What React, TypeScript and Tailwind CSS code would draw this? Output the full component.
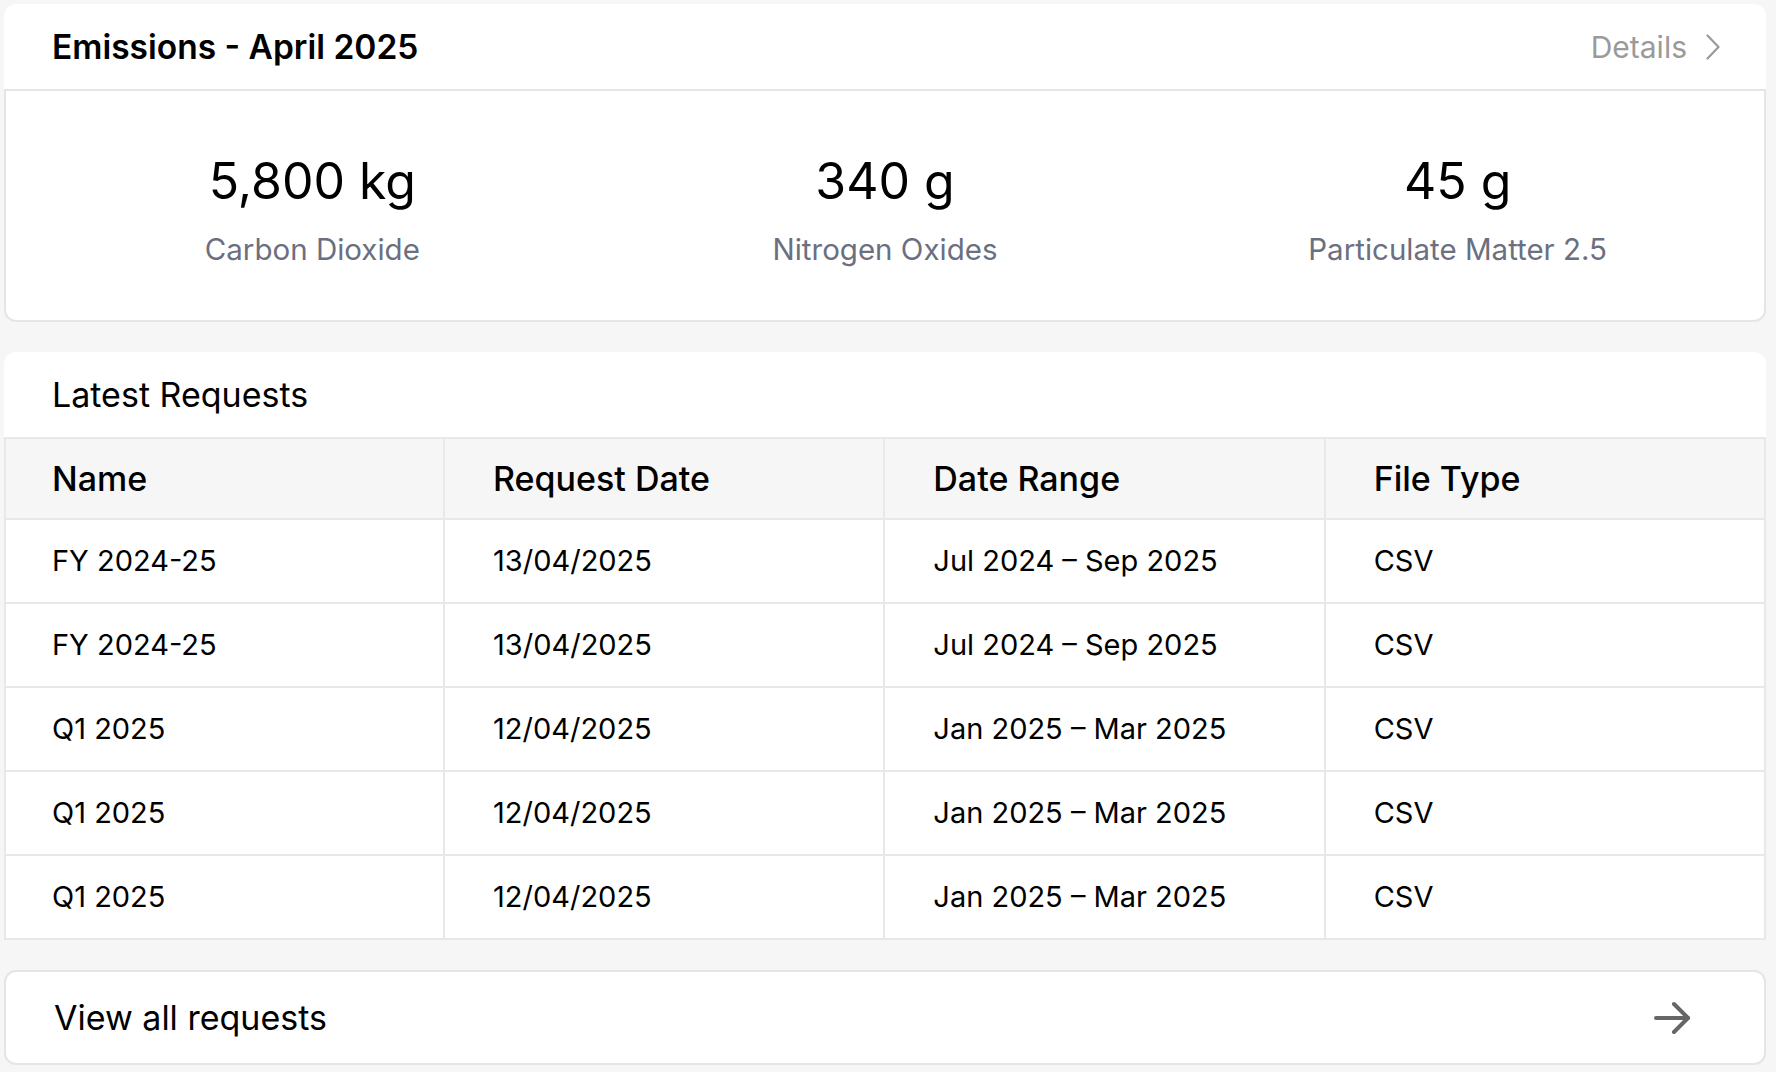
type Stat = { value: string; label: string };

const stats: Stat[] = [
  { value: "5,800 kg", label: "Carbon Dioxide" },
  { value: "340 g", label: "Nitrogen Oxides" },
  { value: "45 g", label: "Particulate Matter 2.5" },
];

const columns = ["Name", "Request Date", "Date Range", "File Type"];

const rows = [
  ["FY 2024-25", "13/04/2025", "Jul 2024 – Sep 2025", "CSV"],
  ["FY 2024-25", "13/04/2025", "Jul 2024 – Sep 2025", "CSV"],
  ["Q1 2025", "12/04/2025", "Jan 2025 – Mar 2025", "CSV"],
  ["Q1 2025", "12/04/2025", "Jan 2025 – Mar 2025", "CSV"],
  ["Q1 2025", "12/04/2025", "Jan 2025 – Mar 2025", "CSV"],
];

const ChevronIcon = () => (
  <svg width="14" height="26" viewBox="0 0 14 26" fill="none" stroke="#9a9a9a" strokeWidth="2.2" strokeLinecap="round" strokeLinejoin="round">
    <polyline points="1.5,1.5 12.5,13 1.5,24.5" />
  </svg>
);

const ArrowIcon = () => (
  <svg
    width="48"
    height="48"
    viewBox="0 0 24 24"
    fill="none"
    stroke="#666666"
    strokeWidth="2"
    strokeLinecap="round"
    strokeLinejoin="round"
  >
    <path d="M4 12h16" />
    <path d="m13 5 7 7-7 7" />
  </svg>
);

export default function App() {
  return (
    <div
      className="min-h-screen bg-[#f6f6f6] pl-[4px] pr-[10px] pt-[4px] flex flex-col gap-[30px] text-black"
      style={{ fontFamily: "Inter, 'Noto Sans', sans-serif" }}
    >
      {/* Emissions card */}
      <div>
        <div className="bg-white rounded-t-[12px] h-[85px] flex items-center justify-between pl-[48px] pr-[46px]">
          <h2 className="text-[33.5px] leading-[40px] font-semibold">Emissions - April 2025</h2>
          <div className="flex items-center gap-[19px] text-[#9a9a9a]">
            <span className="text-[30px] leading-[36px]">Details</span>
            <ChevronIcon />
          </div>
        </div>
        <div className="bg-white border-2 border-[#e4e4e9] rounded-b-[12px] grid grid-cols-3 px-[20px] pt-[60px] pb-[53px]">
          {stats.map((s) => (
            <div key={s.label} className="flex flex-col items-center">
              <div className="text-[50px] leading-[60px]">{s.value}</div>
              <div className="text-[29.5px] leading-[36px] mt-[20px] text-[#6b6f80]">{s.label}</div>
            </div>
          ))}
        </div>
      </div>

      {/* Latest requests */}
      <div>
        <div className="bg-white rounded-t-[12px] h-[85px] flex items-center pl-[48px]">
          <h2 className="text-[34px] leading-[40px]">Latest Requests</h2>
        </div>
        <div className="border-2 border-[#e8e8e8] bg-white">
          <div className="grid grid-cols-[437px_1fr_1fr_1fr] h-[79px] bg-[#f6f6f6]">
            {columns.map((c, i) => (
              <div
                key={c}
                className={`flex items-center text-[34px] leading-[40px] font-medium ${
                  i > 0 ? "border-l-2 border-[#e8e8e8] pl-[48px]" : "pl-[46px]"
                }`}
              >
                {c}
              </div>
            ))}
          </div>
          {rows.map((r, ri) => (
            <div key={ri} className="grid grid-cols-[437px_1fr_1fr_1fr] h-[84px] border-t-2 border-[#e8e8e8]">
              {r.map((cell, ci) => (
                <div
                  key={ci}
                  className={`flex items-center text-[29px] leading-[36px] ${
                    ci > 0 ? "border-l-2 border-[#e8e8e8] pl-[48px]" : "pl-[46px]"
                  }`}
                >
                  {cell}
                </div>
              ))}
            </div>
          ))}
        </div>
      </div>

      {/* View all */}
      <div className="bg-white border-2 border-[#e4e4e9] rounded-[12px] h-[95px] flex items-center justify-between pl-[48px] pr-[68px]">
        <span className="text-[34px] leading-[40px]">View all requests</span>
        <ArrowIcon />
      </div>
    </div>
  );
}
